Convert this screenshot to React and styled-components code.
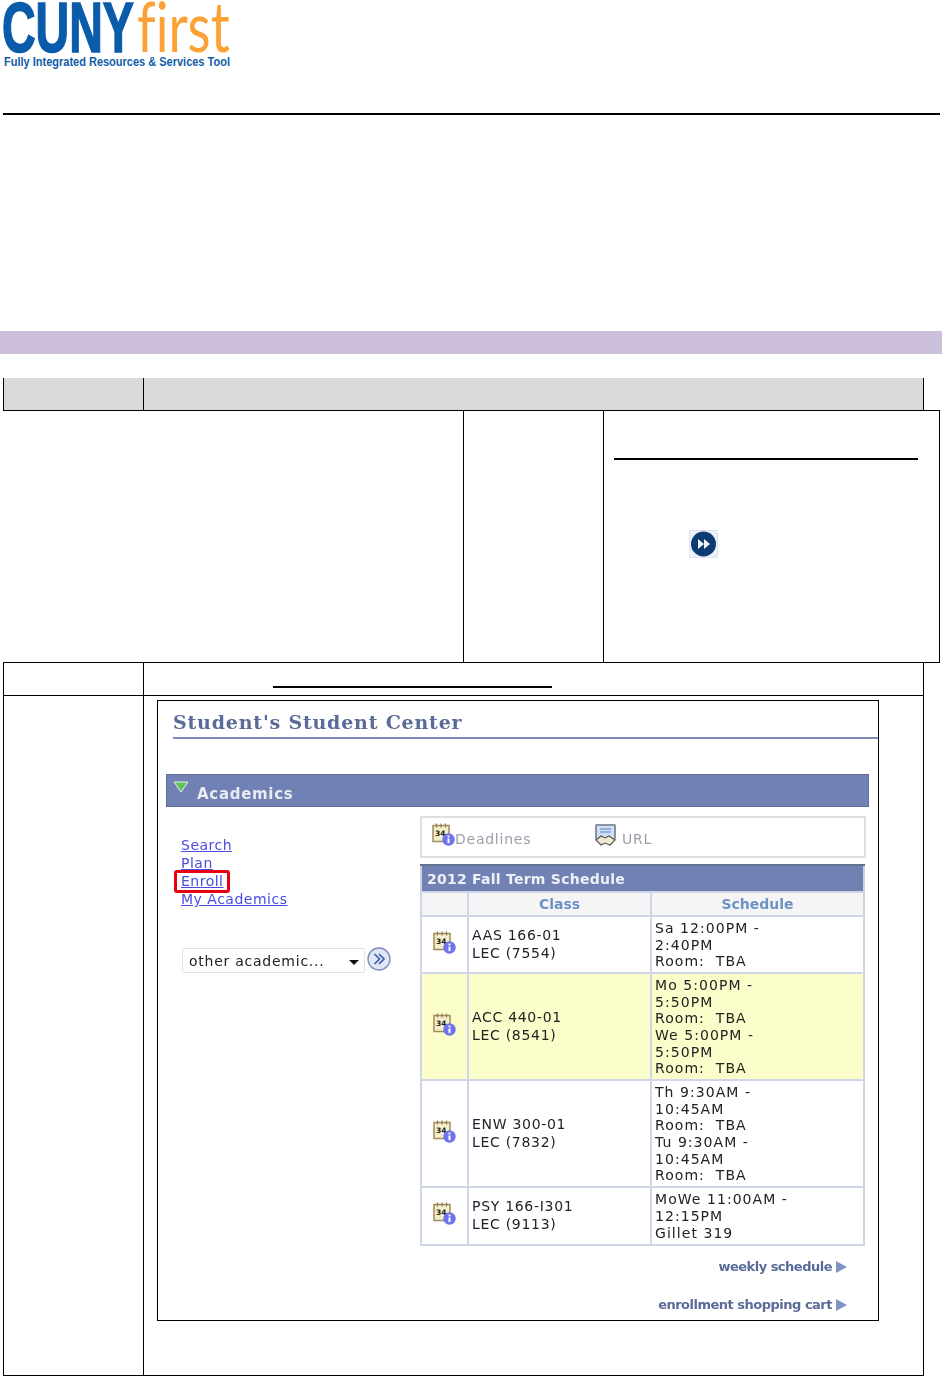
import React from "react";
import styled, { createGlobalStyle } from "styled-components";

const GlobalStyle = createGlobalStyle`
  html, body {
    margin: 0;
    padding: 0;
    background: #fff;
  }
  body {
    font-family: "DejaVu Sans", Verdana, sans-serif;
  }
`;

const Page = styled.div`
  width: 942px;
  height: 1376px;
  overflow: hidden;
`;

const Logo = styled.div`
  height: 113px;
  padding-left: 3px;
  box-sizing: border-box;
  overflow: hidden;
`;

const LogoWords = styled.div`
  display: flex;
  height: 55px;
`;

const LogoCuny = styled.span`
  display: block;
  width: 135px;
  flex: none;
  margin-left: -1px;
  font-family: "Liberation Sans", Arial, sans-serif;
  font-weight: 700;
  font-size: 70px;
  line-height: 56px;
  color: #0a5cab;
  -webkit-text-stroke: 1.6px #0a5cab;
  transform: scaleX(0.665);
  transform-origin: left top;
  white-space: nowrap;
`;

const LogoFirst = styled.span`
  display: block;
  font-family: Lato, sans-serif;
  font-weight: 400;
  font-size: 70px;
  line-height: 50px;
  font-variant-ligatures: none;
  color: #fba135;
  transform: scaleX(0.76);
  transform-origin: left top;
  white-space: nowrap;
`;

const LogoTagline = styled.div`
  margin-left: 1px;
  font-family: "Liberation Sans", Arial, sans-serif;
  font-weight: 700;
  font-size: 13px;
  line-height: 14px;
  color: #0f5ca8;
  white-space: nowrap;
  transform: scaleX(0.846);
  transform-origin: left top;
`;

const HeaderRule = styled.div`
  width: 937px;
  height: 2px;
  margin-left: 3px;
  background: #000;
`;

const Band = styled.div`
  height: 23px;
  margin-top: 216px;
  background: #cbbfd9;
`;

const Sheet = styled.div`
  margin: 24px 0 0 3px;
`;

const TwoCol = styled.div`
  display: grid;
  grid-template-columns: 140px 779px;
  width: 921px;
  height: ${(p) => p.$height}px;
  box-sizing: border-box;
  background: ${(p) => (p.$shaded ? "#d9d9d9" : "#fff")};
  border-left: 1px solid #000;
  border-right: 1px solid #000;
  border-bottom: ${(p) => (p.$ruled ? "1px solid #000" : "none")};
`;

const SideCell = styled.div`
  border-right: 1px solid #000;
`;

const MainCell = styled.div`
  min-width: 0;
`;

const NoteRow = styled.div`
  display: flex;
  width: 937px;
  height: 253px;
  box-sizing: border-box;
  border-top: 1px solid #000;
  border-bottom: 1px solid #000;
`;

const NoteCell = styled.div`
  width: ${(p) => p.$width}px;
  box-sizing: border-box;
  border-right: 1px solid #000;
`;

const NotePanel = styled.div`
  padding: 47px 0 0 10px;
`;

const NoteRule = styled.div`
  width: 304px;
  height: 2px;
  background: #000;
`;

const NoteIcon = styled.svg`
  display: block;
  width: 29px;
  height: 28px;
  margin: 70px 0 0 75px;
`;

const LinkRule = styled.div`
  width: 279px;
  height: 2px;
  margin: 23px 0 0 129px;
  background: #000;
`;

const ShotCell = styled(MainCell)`
  padding: 4px 0 0 13px;
`;

const Shot = styled.div`
  width: 722px;
  height: 621px;
  box-sizing: border-box;
  border: 1px solid #000;
  overflow: hidden;
`;

const ShotBody = styled.div`
  filter: blur(0.4px);
`;

const ShotHead = styled.div`
  margin: 8px 0 0 15px;
  padding-bottom: 1px;
  border-bottom: 2px solid #7c8cba;
  font-family: "DejaVu Serif", serif;
  font-weight: 700;
  font-size: 19px;
  line-height: 27px;
  letter-spacing: 0.8px;
  color: #5b6b99;
`;

const SectionBar = styled.div`
  display: flex;
  align-items: center;
  gap: 8px;
  width: 703px;
  height: 33px;
  box-sizing: border-box;
  margin: 35px 0 0 8px;
  padding: 0 0 0 6px;
  background: #7181b3;
  border: 1px solid #5f6d9b;
`;

const Caret = styled.svg`
  width: 16px;
  height: 12px;
  margin-top: -8px;
`;

const SectionTitle = styled.div`
  font-weight: 700;
  font-size: 15px;
  letter-spacing: 0.7px;
  color: #e8ebf4;
  margin-top: 7px;
`;

const Columns = styled.div`
  display: flex;
  margin: 9px 0 0 8px;
`;

const LeftCol = styled.div`
  width: 254px;
  padding: 20px 0 0 15px;
  box-sizing: border-box;
`;

const NavList = styled.div`
  display: flex;
  flex-direction: column;
  align-items: flex-start;
`;

const NavLink = styled.a`
  position: relative;
  font-size: 14px;
  line-height: 18px;
  letter-spacing: 0.5px;
  color: #4b4be0;
  text-decoration: underline;
  &::after {
    content: "";
    display: ${(p) => (p.$marked ? "block" : "none")};
    position: absolute;
    left: -7px;
    right: -6px;
    top: -2px;
    bottom: -3px;
    border: 3px solid #e60012;
    border-radius: 3px;
  }
`;

const JumpRow = styled.div`
  display: flex;
  align-items: flex-start;
  gap: 2px;
  margin: 40px 0 0 1px;
`;

const FakeSelect = styled.div`
  display: flex;
  align-items: center;
  justify-content: space-between;
  width: 183px;
  height: 25px;
  box-sizing: border-box;
  padding: 0 5px 0 6px;
  border: 1px solid #dfe1e6;
  border-radius: 2px;
  font-size: 14px;
  letter-spacing: 0.75px;
  color: #222;
`;

const SelectArrow = styled.span`
  width: 0;
  height: 0;
  margin-top: 4px;
  border-left: 5px solid transparent;
  border-right: 5px solid transparent;
  border-top: 5px solid #111;
`;

const GoIcon = styled.svg`
  width: 24px;
  height: 24px;
  margin-top: -1px;
`;

const RightCol = styled.div`
  width: 446px;
`;

const LinkBox = styled.div`
  display: flex;
  align-items: flex-start;
  width: 446px;
  height: 42px;
  box-sizing: border-box;
  padding: 5px 0 0 10px;
  border: 2px solid #dfdfdf;
  font-size: 14px;
  color: #9aa0aa;
`;

const LinkEntry = styled.div`
  display: flex;
  align-items: flex-start;
  width: ${(p) => p.$width}px;
  gap: ${(p) => p.$gap}px;
`;

const LinkLabel = styled.span`
  margin-top: 8px;
  letter-spacing: 0.75px;
`;

const Schedule = styled.table`
  width: 443px;
  margin-top: 6px;
  border-collapse: collapse;
  table-layout: fixed;
  border: 2px solid #c9d2e6;
  font-size: 14px;
  color: #222;
`;

const Column = styled.col`
  width: ${(p) => p.$width}px;
`;

const ScheduleTitle = styled.th`
  height: 25px;
  padding: 0 0 0 5px;
  background: #7181b3;
  border: 1px solid #62708f;
  border-top-width: 2px;
  text-align: left;
  font-weight: 700;
  font-size: 14px;
  letter-spacing: 0.25px;
  color: #eef0f7;
`;

const HeadCell = styled.th`
  height: 22px;
  padding: 0;
  background: #f5f5f5;
  border: 2px solid #ced6e8;
  font-size: 14px;
  font-weight: 700;
  color: #6e92c4;
`;

const Cell = styled.td`
  padding: ${(p) => p.$padding};
  background: ${(p) => (p.$highlight ? "#fbfdca" : "#fff")};
  border: 2px solid #ced6e8;
  line-height: ${(p) => p.$lineHeight || 18}px;
  letter-spacing: ${(p) => p.$spacing || 0.7}px;
  text-align: left;
  white-space: nowrap;
`;

const RowIcon = styled.div`
  display: flex;
  justify-content: center;
  margin-top: -5px;
`;

const Footer = styled.div`
  display: flex;
  flex-direction: column;
  align-items: flex-end;
  gap: 21px;
  margin-top: 12px;
  padding-right: 31px;
`;

const MoreLink = styled.a`
  display: flex;
  align-items: center;
  gap: 4px;
  font-weight: 700;
  font-size: 13px;
  line-height: 17px;
  letter-spacing: -0.5px;
  color: #5b6b99;
`;

const MoreArrow = styled.span`
  width: 0;
  height: 0;
  border-top: 6px solid transparent;
  border-bottom: 6px solid transparent;
  border-left: 11px solid #7f93c4;
`;

const CalendarIcon = () => (
  <svg width="23" height="23" viewBox="0 0 23 23" style={{ display: "block", flex: "none" }}>
    <rect x="1" y="2.5" width="16" height="16" fill="#f4eecb" stroke="#a08c5e" strokeWidth="1.5" />
    <path d="M4.5 0.5v4M9 0.5v4M13.5 0.5v4" stroke="#8a7a50" strokeWidth="1.2" />
    <text x="3" y="12.5" fontFamily="DejaVu Sans, sans-serif" fontWeight="700" fontSize="7.5" letterSpacing="0" fill="#222">
      34
    </text>
    <circle cx="16.5" cy="16.5" r="6.2" fill="#6f73ee" />
    <rect x="15.5" y="15.5" width="2" height="4.6" fill="#fff" />
    <rect x="15.5" y="12.6" width="2" height="1.8" fill="#fff" />
  </svg>
);

const UrlIcon = () => (
  <svg width="23" height="23" viewBox="0 0 23 23" style={{ display: "block", flex: "none" }}>
    <rect x="1" y="1" width="21" height="16" rx="1.5" fill="#8b93a0" />
    <rect x="3" y="3" width="17" height="12" fill="#cfe0f5" />
    <path d="M6 6h11M6 9h11" stroke="#7f9fd8" strokeWidth="1.3" />
    <path d="M2 17l5-4 4 2 4-2 6 4-5 5-5-2-4 2z" fill="#f2ead0" stroke="#555" strokeWidth="1.1" />
  </svg>
);

const rows = [
  { course: "AAS 166-01", section: "LEC (7554)", height: 57, times: ["Sa 12:00PM -", "2:40PM", "Room:\u00a0 TBA"] },
  { course: "ACC 440-01", section: "LEC (8541)", height: 107, highlight: true, times: ["Mo 5:00PM -", "5:50PM", "Room:\u00a0 TBA", "We 5:00PM -", "5:50PM", "Room:\u00a0 TBA"] },
  { course: "ENW 300-01", section: "LEC (7832)", height: 107, times: ["Th 9:30AM -", "10:45AM", "Room:\u00a0 TBA", "Tu 9:30AM -", "10:45AM", "Room:\u00a0 TBA"] },
  { course: "PSY 166-I301", section: "LEC (9113)", height: 58, times: ["MoWe 11:00AM -", "12:15PM", "Gillet 319"] },
];

export default function App() {
  return (
    <Page>
      <GlobalStyle />
      <Logo>
        <LogoWords>
          <LogoCuny>CUNY</LogoCuny>
          <LogoFirst>first</LogoFirst>
        </LogoWords>
        <LogoTagline>Fully Integrated Resources &amp; Services Tool</LogoTagline>
      </Logo>
      <HeaderRule />
      <Band />
      <Sheet>
        <TwoCol $height={32} $shaded>
          <SideCell />
          <MainCell />
        </TwoCol>
        <NoteRow>
          <NoteCell $width={461} />
          <NoteCell $width={140} />
          <NoteCell $width={336}>
            <NotePanel>
              <NoteRule />
              <NoteIcon viewBox="0 0 29 28">
                <rect x="0.5" y="0.5" width="28" height="27" fill="#eef0fa" stroke="#dfe3f5" />
                <circle cx="14.5" cy="14" r="12.5" fill="#0e3b72" />
                <path d="M9 9l6 5-6 5zM15 9l6 5-6 5z" fill="#f2f5f8" />
              </NoteIcon>
            </NotePanel>
          </NoteCell>
        </NoteRow>
        <TwoCol $height={33} $ruled>
          <SideCell />
          <MainCell>
            <LinkRule />
          </MainCell>
        </TwoCol>
        <TwoCol $height={680} $ruled>
          <SideCell />
          <ShotCell>
            <Shot>
              <ShotBody>
                <ShotHead>Student's Student Center</ShotHead>
                <SectionBar>
                  <Caret viewBox="0 0 16 12">
                    <path d="M1 1h14L8 11z" fill="#5fc25a" stroke="#e6efe6" strokeWidth="1" />
                  </Caret>
                  <SectionTitle>Academics</SectionTitle>
                </SectionBar>
                <Columns>
                  <LeftCol>
                    <NavList>
                      <NavLink>Search</NavLink>
                      <NavLink>Plan</NavLink>
                      <NavLink $marked>Enroll</NavLink>
                      <NavLink>My Academics</NavLink>
                    </NavList>
                    <JumpRow>
                      <FakeSelect>
                        other academic...
                        <SelectArrow />
                      </FakeSelect>
                      <GoIcon viewBox="0 0 24 24">
                        <circle cx="12" cy="12" r="11" fill="#dfe6f5" stroke="#7c8cba" strokeWidth="1.4" />
                        <path d="M7.5 7l5 5-5 5M12 7l5 5-5 5" fill="none" stroke="#3f5fae" strokeWidth="1.7" />
                      </GoIcon>
                    </JumpRow>
                  </LeftCol>
                  <RightCol>
                    <LinkBox>
                      <LinkEntry $width={162} $gap={0}>
                        <CalendarIcon />
                        <LinkLabel>Deadlines</LinkLabel>
                      </LinkEntry>
                      <LinkEntry $width={80} $gap={5}>
                        <UrlIcon />
                        <LinkLabel>URL</LinkLabel>
                      </LinkEntry>
                    </LinkBox>
                    <Schedule>
                      <colgroup>
                        <Column $width={47} />
                        <Column $width={183} />
                        <Column $width={213} />
                      </colgroup>
                      <thead>
                        <tr>
                          <ScheduleTitle colSpan={3}>2012 Fall Term Schedule</ScheduleTitle>
                        </tr>
                        <tr>
                          <HeadCell />
                          <HeadCell>Class</HeadCell>
                          <HeadCell>Schedule</HeadCell>
                        </tr>
                      </thead>
                      <tbody>
                        {rows.map((row) => (
                          <tr key={row.course} style={{ height: row.height }}>
                            <Cell $highlight={row.highlight} $padding="0">
                              <RowIcon>
                                <CalendarIcon />
                              </RowIcon>
                            </Cell>
                            <Cell $highlight={row.highlight} $padding="0 0 2px 3px">
                              {row.course}
                              <br />
                              {row.section}
                            </Cell>
                            <Cell $highlight={row.highlight} $padding="1px 0 0 3px" $lineHeight={16.7} $spacing={1.05}>
                              {row.times.map((t, i) => (
                                <div key={i}>{t}</div>
                              ))}
                            </Cell>
                          </tr>
                        ))}
                      </tbody>
                    </Schedule>
                  </RightCol>
                </Columns>
                <Footer>
                  <MoreLink>
                    weekly schedule
                    <MoreArrow />
                  </MoreLink>
                  <MoreLink>
                    enrollment shopping cart
                    <MoreArrow />
                  </MoreLink>
                </Footer>
              </ShotBody>
            </Shot>
          </ShotCell>
        </TwoCol>
      </Sheet>
    </Page>
  );
}
